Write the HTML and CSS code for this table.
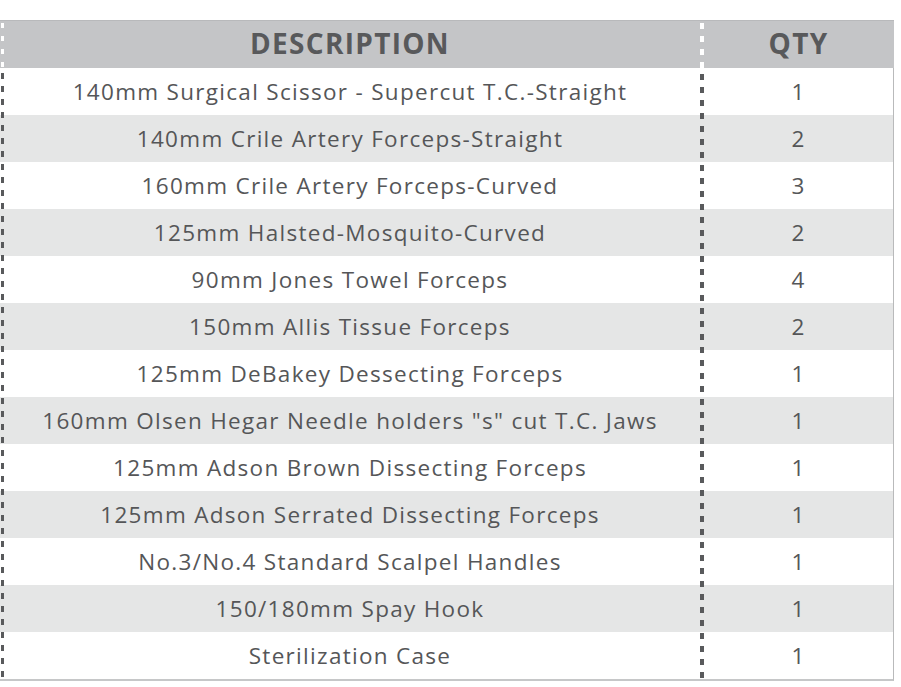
FILE: index.html
```html
<!DOCTYPE html>
<html>
<head>
<meta charset="utf-8">
<link rel="stylesheet" href="styles.css">
</head>
<body>
<div class="sheet">
  <div class="head">
    <div class="cell desc">DESCRIPTION</div>
    <div class="cell qty">QTY</div>
  </div>
  <div class="body">
    <div class="row"><div class="cell desc">140mm Surgical Scissor - Supercut T.C.-Straight</div><div class="cell qty">1</div></div>
    <div class="row"><div class="cell desc">140mm Crile Artery Forceps-Straight</div><div class="cell qty">2</div></div>
    <div class="row"><div class="cell desc">160mm Crile Artery Forceps-Curved</div><div class="cell qty">3</div></div>
    <div class="row"><div class="cell desc">125mm Halsted-Mosquito-Curved</div><div class="cell qty">2</div></div>
    <div class="row"><div class="cell desc">90mm Jones Towel Forceps</div><div class="cell qty">4</div></div>
    <div class="row"><div class="cell desc">150mm Allis Tissue Forceps</div><div class="cell qty">2</div></div>
    <div class="row"><div class="cell desc">125mm DeBakey Dessecting Forceps</div><div class="cell qty">1</div></div>
    <div class="row"><div class="cell desc">160mm Olsen Hegar Needle holders "s" cut T.C. Jaws</div><div class="cell qty">1</div></div>
    <div class="row"><div class="cell desc">125mm Adson Brown Dissecting Forceps</div><div class="cell qty">1</div></div>
    <div class="row"><div class="cell desc">125mm Adson Serrated Dissecting Forceps</div><div class="cell qty">1</div></div>
    <div class="row"><div class="cell desc">No.3/No.4 Standard Scalpel Handles</div><div class="cell qty">1</div></div>
    <div class="row"><div class="cell desc">150/180mm Spay Hook</div><div class="cell qty">1</div></div>
    <div class="row"><div class="cell desc">Sterilization Case</div><div class="cell qty">1</div></div>
  </div>
</div>
</body>
</html>
```
FILE: styles.css
```css
html, body {
  margin: 0;
  padding: 0;
  background: #fff;
}
body {
  font-family: "Open Sans", "Liberation Sans", sans-serif;
  color: #555658;
}
.sheet {
  margin-top: 20px;
  width: 894px;
}
.head {
  display: grid;
  grid-template-columns: 700px 193px;
  height: 48px;
  background-color: #c4c5c7;
  border-top: 1px solid #b8b9bb;
  box-sizing: border-box;
  background-image:
    repeating-linear-gradient(to bottom, transparent 0 2px, #fff 2px 7px, transparent 7px 13px),
    repeating-linear-gradient(to bottom, transparent 0 2px, #fff 2px 8px, transparent 8px 13px);
  background-size: 3px 100%, 4px 100%;
  background-position: 1px 0, 700px 0;
  background-repeat: no-repeat;
}
.head .cell {
  font-weight: 700;
  font-size: 28px;
  color: #58595b;
  letter-spacing: 1.3px;
  padding-bottom: 3px;
}
.body {
  border-right: 1px solid #b9babb;
  border-bottom: 2px solid #c6c7c8;
  width: 893px;
  box-sizing: content-box;
  background-image:
    repeating-linear-gradient(to bottom, transparent 0 5px, #595a5c 5px 11px, transparent 11px 13px),
    repeating-linear-gradient(to bottom, transparent 0 6px, #595a5c 6px 12px, transparent 12px 13px),
    repeating-linear-gradient(to bottom, #fff 0 47px, #e5e6e6 47px 94px);
  background-size: 3px 100%, 4px 100%, 100% 100%;
  background-position: 1px 0, 700px 0, 0 0;
  background-repeat: no-repeat;
}
.head, .row {
  display: grid;
  grid-template-columns: 700px 193px;
}
.row {
  height: 47px;
}
.cell {
  display: flex;
  align-items: center;
  justify-content: center;
  white-space: nowrap;
}
.row .cell {
  font-size: 22.5px;
  letter-spacing: 1.3px;
}
.row .qty {
  padding-left: 4px;
}
.head .qty {
  padding-left: 4px;
}
```
